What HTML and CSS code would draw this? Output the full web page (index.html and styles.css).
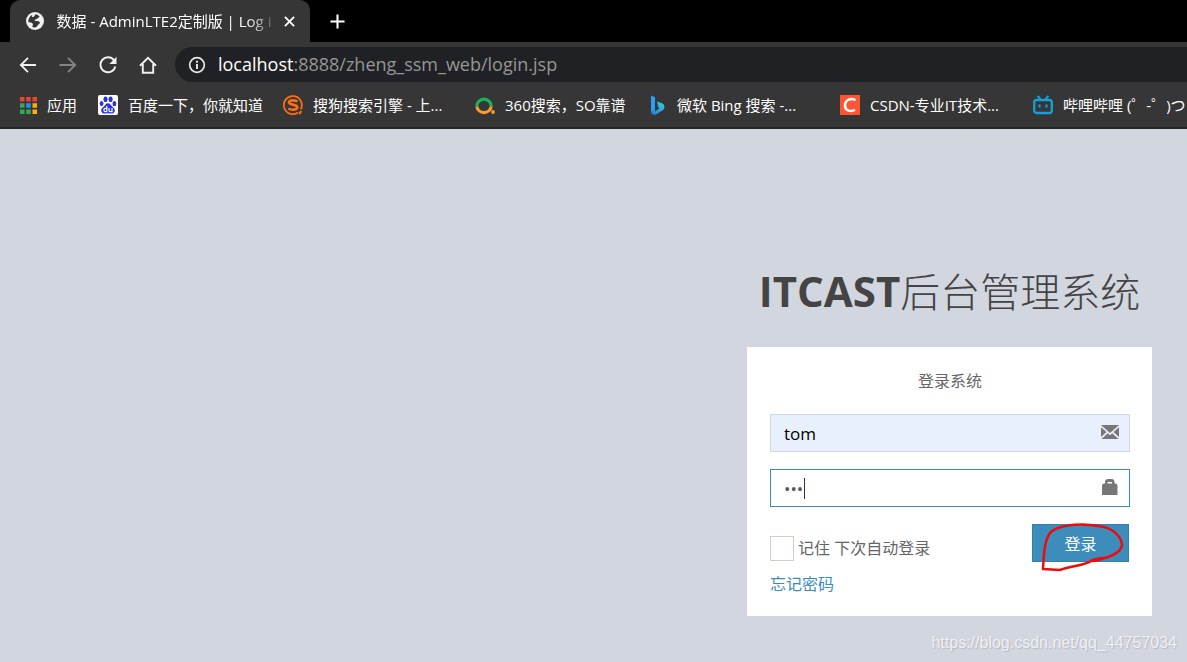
FILE: index.html
```html
<!DOCTYPE html>
<html lang="zh-CN">
<head>
<meta charset="utf-8">
<title>数据 - AdminLTE2定制版 | Log in</title>
<link rel="stylesheet" href="styles.css">
</head>
<body>
<header class="browser">
  <div class="tabs">
    <div class="tab">
      <svg class="icon-globe" viewBox="0 0 18 18" aria-hidden="true">
        <circle cx="9" cy="9" r="9" fill="#f1f1f1"/>
        <path d="M9.500 2.200c1.700.3 3.100 1 4.200 2.300-.7.300-.8 1.300-1.700 1.500-.7.200-1 .9-1.600 1.200-.6.300-1.400 0-1.700.7-.2.700.4 1.100 1.300 1.100 1.600 0 3.500.300 3.900 1.400.2 1-1.100 1.600-1.800 2.300-.8 1-1 2-2.300 2.500-1 .4-2.500.3-3.600-.2l.6-1.700c.3-.7.2-1.200-.3-1.800-.5-.6-1.400-.6-2.100-.9-.7-.3-1.500-.4-2.200-.7C2.300 6.500 4 3.500 6.500 2.700 6 3.800 5.500 4.500 6.500 5c1 .4 1.500-.3 2-.9.500-.7.200-1.400 1-1.900z" fill="#363636"/>
      </svg>
      <span class="tab-title">数据 - AdminLTE2定制版 | Log i</span>
      <button class="plain tab-close" aria-label="关闭标签页"><svg viewBox="0 0 12 12"><path d="M1 1l10 10M11 1L1 11" stroke="#fff" stroke-width="2"/></svg></button>
    </div>
    <button class="plain new-tab" aria-label="新标签页"><svg viewBox="0 0 16 16"><path d="M8 0.500v15M0.500 8h15" stroke="#fff" stroke-width="2.200"/></svg></button>
  </div>
  <div class="toolbar">
    <nav class="nav">
      <button class="plain nav-button" aria-label="后退"><svg viewBox="0 0 18 18"><path d="M17 9H2M9 1.800 1.800 9 9 16.200" fill="none" stroke="#f1f1f1" stroke-width="1.800"/></svg></button>
      <button class="plain nav-button" aria-label="前进"><svg viewBox="0 0 18 18"><path d="M.5 9H16M9 1.800 16.200 9 9 16.200" fill="none" stroke="#858585" stroke-width="1.800"/></svg></button>
      <button class="plain nav-button" aria-label="重新加载"><svg viewBox="0 0 18 18"><path d="M15.200 4.500A7.500 7.500 0 1 0 16.300 10.500" fill="none" stroke="#f1f1f1" stroke-width="1.900"/><path d="M17.500.8v7.200h-7.200z" fill="#f1f1f1"/></svg></button>
      <button class="plain nav-button" aria-label="主页"><svg viewBox="0 0 18 18"><path d="M1 9.700 9 1.800l8 7.900M3.800 8v8.700h10.400V8" fill="none" stroke="#f1f1f1" stroke-width="1.900"/></svg></button>
    </nav>
    <div class="address">
      <svg class="icon-info" viewBox="0 0 18 18" aria-hidden="true"><circle cx="9" cy="9" r="7.300" fill="none" stroke="#e8e8e8" stroke-width="1.700"/><path d="M9 8v5M9 4.800v1.900" stroke="#e8e8e8" stroke-width="1.900"/></svg>
      <div class="url" role="textbox" aria-label="地址"><span class="url-host">localhost</span>:8888/zheng_ssm_web/login.jsp</div>
    </div>
  </div>
  <nav class="bookmarks">
    <a class="bookmark" href="#">
      <svg class="icon-apps" viewBox="0 0 17 17" aria-hidden="true"><path fill="#ea4335" d="M0 0h4.500v4.500H0zM6.200 0h4.500v4.500H6.200zM12.500 0H17v4.500h-4.500z"/><path fill="#34a853" d="M0 6.200h4.500v4.500H0zM0 12.500h4.500V17H0zM6.200 12.500h4.500V17H6.200z"/><path fill="#2d8cf0" d="M6.200 6.200h4.500v4.500H6.200z"/><path fill="#fbad08" d="M12.500 6.200H17v4.500h-4.500zM12.500 12.500H17V17h-4.500z"/></svg>
      <span>应用</span></a>
    <a class="bookmark" href="#">
      <svg class="icon-site" viewBox="0 0 20 20" aria-hidden="true"><rect width="20" height="20" rx="2" fill="#fff"/><g fill="#2932e1"><ellipse cx="7.500" cy="4.300" rx="2" ry="2.800"/><ellipse cx="12.600" cy="4.300" rx="2" ry="2.800"/><ellipse cx="3.600" cy="8.500" rx="1.900" ry="2.600"/><ellipse cx="16.400" cy="8.700" rx="1.900" ry="2.600"/><path d="M10 8.200c2 0 2.600 1.700 3.900 3 1.500 1.400 3 2.300 2.900 4.300-.1 2.100-1.800 3.200-3.500 3.100-1.200-.1-2.100-.4-3.300-.4s-2.100.3-3.300.4c-1.700.1-3.400-1-3.500-3.100-.1-2 1.400-2.900 2.900-4.300C7.400 9.900 8 8.200 10 8.200z"/></g><path d="M8.800 11v5.800M8.800 13.300H7.200q-1.200 0-1.200 1.200v.9q0 1.200 1.200 1.200h1.600M11 13.100v2.500q0 1 1 1h2v-3.500" fill="none" stroke="#fff" stroke-width="1.200"/></svg>
      <span>百度一下，你就知道</span></a>
    <a class="bookmark" href="#">
      <svg class="icon-site" viewBox="0 0 20 20" aria-hidden="true"><path d="M17.800 14.300A9 9 0 1 0 15 17.500" fill="none" stroke="#fd6d16" stroke-width="1.800"/><path d="M14.500 6.500C12.600 5 6 4.500 6 7.300c0 2.900 8.300 1.600 8.300 5 0 3-6.500 3-9 1.200" fill="none" stroke="#fd6d16" stroke-width="2.700"/><path d="m16 19 2.500-3" stroke="#fd6d16" stroke-width="2"/></svg>
      <span>搜狗搜索引擎 - 上...</span></a>
    <a class="bookmark" href="#">
      <svg class="icon-site" viewBox="0 0 20 20" aria-hidden="true"><path d="M1.700 11.500a7.300 7.300 0 1 1 14.600 0" fill="none" stroke="#16b45b" stroke-width="3.200"/><path d="M1.800 11.500a7.300 7.300 0 0 0 14.400 0" fill="none" stroke="#f99b2e" stroke-width="3.200"/><circle cx="18" cy="17" r="1.900" fill="#f99b2e"/></svg>
      <span>360搜索，SO靠谱</span></a>
    <a class="bookmark bookmark-bing" href="#">
      <svg class="icon-site" viewBox="0 0 20 20" aria-hidden="true"><defs><linearGradient id="bing" x1="0" y1="1" x2="1" y2="0"><stop stop-color="#2376e5"/><stop offset="1" stop-color="#37d5d5"/></linearGradient></defs><path d="m2 .5 4 1.700v14L2 17z" fill="#2f9cf2"/><path d="m8 6.500 4.500 1.500c3 1 4 4.700 1.500 7L7.500 19.200c-2 1.200-5.500.5-5.500-2.700l4-.2 4.200-2.600-1-2z" fill="url(#bing)"/></svg>
      <span>微软 Bing 搜索 -...</span></a>
    <a class="bookmark" href="#">
      <svg class="icon-site" viewBox="0 0 20 20" aria-hidden="true"><path d="M0 0h20v20H0z" fill="#fc5531"/><path d="M15.500 5.300C11.800 2.400 5 4.500 5 10.500c0 5.500 6 6.600 10 4.200" fill="none" stroke="#fff" stroke-width="2.500"/></svg>
      <span>CSDN-专业IT技术...</span></a>
    <a class="bookmark" href="#">
      <svg class="icon-site" viewBox="0 0 20 20" aria-hidden="true"><rect x="1.200" y="5" width="17.600" height="13" rx="2.500" fill="none" stroke="#16a0d8" stroke-width="2.300"/><path d="m4.500 1 3 3M15.500 1l-3 3M6.500 9.500v3M13.500 9.500v3" stroke="#16a0d8" stroke-width="2.100"/></svg>
      <span>哔哩哔哩 (゜-゜)つ</span></a>
  </nav>
</header>
<main class="page">
  <div class="login">
    <h1 class="logo"><b>ITCAST</b>后台管理系统</h1>
    <form class="card">
      <p class="card-title">登录系统</p>
      <div class="field">
        <input class="text user" type="text" value="tom" aria-label="用户名">
        <svg class="field-icon" viewBox="0 0 18 18" aria-hidden="true"><path d="M0 2h18L9 10zM0 4.200 5.500 9 0 14zM18 4.200 12.500 9l5.500 5zM6.800 10.200 9 12.200l2.200-2L17.500 16H.5z" fill="#777"/></svg>
      </div>
      <div class="field">
        <input class="text pass" type="password" value="tom" aria-label="密码">
        <span class="caret"></span>
        <svg class="field-icon" viewBox="0 0 18 18" aria-hidden="true"><path d="M4 5.500V4q0-3 3-3h3.500q3 0 3 3v1.500h.8q2.200 0 2.200 2.200V17H1V7.700q0-2.200 2.200-2.200zM6.500 5.500H11V4H6.500z" fill="#777"/></svg>
      </div>
      <div class="actions">
        <label class="remember"><input class="check" type="checkbox"><span>记住 下次自动登录</span></label>
        <button class="submit" type="button">登录
          <svg class="scribble" viewBox="0 0 84 50" aria-hidden="true"><path d="M52 39C66 36 80 32 81 23C80 13 70 5 57 4C43 1 22 2 11 9C3 16 3 32 2 47L19 48C28 44 43 44 50 39C52 37 57 37 61 36" fill="none" stroke="#f00b0b" stroke-width="2.500" stroke-linejoin="round" stroke-linecap="round"/></svg>
        </button>
      </div>
      <a class="forgot" href="#">忘记密码</a>
    </form>
  </div>
  <p class="watermark">https://blog.csdn.net/qq_44757034</p>
</main>
</body>
</html>
```
FILE: styles.css
```css
* { box-sizing: border-box; }
body {
  margin: 0;
  min-height: 100vh;
  display: flex;
  flex-direction: column;
  overflow-x: hidden;
  background: #d2d6de;
  color: #666;
  font-family: "Open Sans", "Noto Sans CJK SC", sans-serif;
  font-size: 16px;
}
svg { display: block; flex: none; }
a { text-decoration: none; }
.plain { border: 0; padding: 0; background: none; }

.browser { background: #363636; border-bottom: 2px solid #242424; color: #fff; }
.tabs { display: flex; align-items: center; height: 42px; padding-left: 10px; background: #000; }
.tab {
  display: flex;
  align-items: center;
  justify-content: space-between;
  width: 300px;
  height: 42px;
  padding: 0 15px 0 16px;
  border-radius: 10px 10px 0 0;
  background: #363636;
}
.icon-globe { width: 18px; height: 18px; }
.tab-title {
  white-space: nowrap;
  font-size: 15px;
  line-height: 22px;
  mask-image: linear-gradient(to right, #000 190px, transparent 222px);
}
.tab-close svg { width: 11px; height: 11px; }
.new-tab { margin-left: 20px; }
.new-tab svg { width: 15px; height: 15px; }

.toolbar { display: flex; align-items: center; height: 45px; padding-left: 19px; }
.nav { display: flex; gap: 22px; }
.nav-button svg { width: 18px; height: 18px; }
.address {
  display: flex;
  flex: 1;
  align-items: center;
  gap: 12px;
  height: 35px;
  margin-left: 18px;
  padding-left: 13px;
  border-radius: 18px 0 0 18px;
  background: #202124;
}
.icon-info { width: 18px; height: 18px; }
.url { padding-bottom: 2px; color: #969696; font-size: 18px; line-height: 26px; white-space: nowrap; }
.url-host { color: #fff; }

.bookmarks {
  display: grid;
  grid-template-columns: 78px 185px 192px 174px 191px 193px 1fr;
  align-items: center;
  height: 40px;
  padding: 0 0 4px 20px;
}
.bookmark {
  display: flex;
  align-items: center;
  gap: 10px;
  min-width: 0;
  color: #fff;
  font-size: 15px;
  line-height: 22px;
  white-space: nowrap;
}
.bookmark-bing { gap: 8px; }
.icon-apps { width: 17px; height: 17px; }
.icon-site { width: 20px; height: 20px; }

.page {
  display: flex;
  flex: 1;
  flex-direction: column;
  align-items: flex-end;
  justify-content: space-between;
  padding: 134px 10px 8px;
}
.login { width: 405px; margin-right: 25px; }
.logo {
  margin: 0 0 26px;
  color: #444;
  font-size: 40px;
  font-weight: 300;
  line-height: 58px;
  text-align: center;
  white-space: nowrap;
}
.logo b { font-size: 42px; font-weight: 700; line-height: 1; }
.card { padding: 22px 22px 20px 23px; background: #fff; }
.card-title { margin: 0 0 21px; line-height: 24px; text-align: center; }
.field { position: relative; margin-bottom: 17px; }
.text {
  display: block;
  width: 100%;
  height: 38px;
  padding: 0 38px 0 13px;
  border: 1px solid #d2d6de;
  border-radius: 0;
  outline: 0;
  font-family: inherit;
  font-size: 17px;
}
.user { background: #e8f0fe; color: #000; }
.pass { border-color: #3c8dbc; background: #fff; color: #555; }
.field-icon { position: absolute; top: 9px; right: 11px; width: 18px; height: 18px; }
.caret { position: absolute; top: 9px; left: 34px; width: 1px; height: 21px; background: #333; }
.actions { display: flex; align-items: flex-start; justify-content: space-between; }
.remember { display: flex; align-items: flex-start; gap: 4px; padding-top: 12px; line-height: 24px; }
.check {
  appearance: none;
  width: 24px;
  height: 25px;
  margin: 0;
  border: 1px solid #d2cdc5;
  background: #fff;
}
.submit {
  position: relative;
  width: 97px;
  height: 38px;
  margin-right: 1px;
  padding: 0;
  border: 1px solid #367fa9;
  background: #3c8dbc;
  color: #fff;
  font-family: inherit;
  font-size: 16px;
}
.scribble { position: absolute; top: -3px; left: 8px; width: 84px; height: 50px; }
.forgot { display: inline-block; margin-top: 10px; color: #3c8dbc; line-height: 24px; }
.watermark {
  margin: 0;
  color: #eef0f4;
  font-family: "Liberation Sans", sans-serif;
  font-size: 16px;
  line-height: 22px;
  text-shadow: 1px 1px 1px #b4b8c0;
}
```
